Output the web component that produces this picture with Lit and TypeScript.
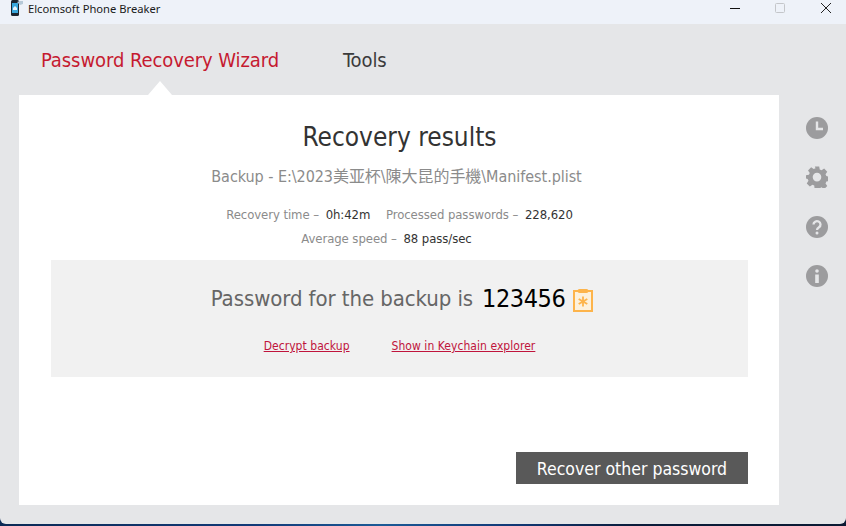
import { LitElement, html, css } from "lit";
import { customElement } from "lit/decorators.js";

@customElement("app-root")
export class AppRoot extends LitElement {
  static styles = css`
    :host { display: block; width: 846px; height: 526px; overflow: hidden; position: relative;
      font-family: "DejaVu Sans Condensed", "DejaVu Sans", "Noto Sans CJK TC", sans-serif; font-stretch: condensed; color: #333;
      background: linear-gradient(90deg,#0b2a55 0,#123a78 30%,#1b5a96 45%,#123a78 60%,#0a1c3a 75%,#0b1a33 100%); }
    .window { height: 524px; display: flex; flex-direction: column; background: #e5e6e8; border-radius: 0 0 6px 6px; overflow: hidden; }
    .titlebar { height: 24px; flex: none; background: #eef2f9; display: flex; align-items: center; }
    .appicon { margin-left: 10px; width: 14px; height: 16px; flex: none; margin-top: -8px; }
    .apptitle { margin-left: 4px; font-size: 11.2px; color: #1a1a1a; flex: 1; margin-top: -7px; font-family: "Noto Sans", sans-serif; font-stretch: normal; }
    .wc { display: flex; align-items: center; flex: none; padding-right: 15px; margin-top: -8px; }
    .wc svg { display: block; }
    .wc .min { margin-right: 35px; }
    .wc .max { margin-right: 36px; }
    .tabs { height: 71px; flex: none; display: flex; padding-left: 41px; gap: 64px; font-size: 20px; letter-spacing: -0.08px; }
    .tab { padding-top: 23px; line-height: 27px; color: #3b3b3b; }
    .tab.on { color: #c51a30; position: relative; }
    .tab.on::after { content: ""; position: absolute; left: 107px; bottom: 0; border-left: 12px solid transparent; border-right: 12px solid transparent; border-bottom: 14px solid #fff; }
    .main { display: flex; flex: none; }
    .card { width: 760px; height: 410px; margin-left: 19px; background: #fff; display: flex; flex-direction: column; align-items: center; padding: 25px 31px 21px 32px; box-sizing: border-box; flex: none; }
    h1 { margin: 0; font-weight: 400; font-size: 26px; line-height: 34px; color: #333; }
    .path { margin: 12px 6px 0 0; font-size: 16px; line-height: 22px; color: #8b8b8b; letter-spacing: -0.05px; }
    .stats { margin-top: 15px; font-size: 13px; line-height: 24px; color: #8b8b8b; text-align: center; width: 420px; letter-spacing: -0.07px; }
    .stats b { font-weight: 400; color: #333; margin-left: 3px; }
    .stats .gap { margin-left: 12px; }
    .stats .second { padding-right: 26px; }
    .panel { margin-top: 9px; width: 100%; height: 117px; background: #f1f1f1; display: flex; flex-direction: column; align-items: center; flex: none; }
    .pw { margin: 23px 0 0 5px; display: flex; align-items: center; font-size: 22px; line-height: 32px; color: #666; letter-spacing: -0.08px; }
    .pw .val { color: #000; font-size: 25px; margin-left: 9px; letter-spacing: -0.45px; }
    .pw svg { margin: 2px 0 0 8px; }
    .links { margin-top: 22px; display: flex; gap: 42px; font-size: 12px; line-height: 18px; }
    .links a { color: #c0143c; text-decoration: underline; letter-spacing: 0.05px; }
    .foot { margin-top: auto; align-self: flex-end; }
    .btn { width: 232px; height: 32px; background: #595959; color: #fff; border: 0; font: inherit; font-size: 17.5px; padding: 1px 0 0; display: block; }
    .side { width: 67px; display: flex; flex-direction: column; align-items: center; padding: 22px 0 0 8px; box-sizing: border-box; gap: 27px; flex: none; }
    .side svg { display: block; }
    .side svg:nth-child(3) { margin-top: 1px; }
  `;

  render() {
    return html`
      <div class="window">
        <div class="titlebar">
          <svg class="appicon" viewBox="0 0 14 16">
            <rect x="1" y="0" width="8" height="16" rx="1.5" fill="#1c2530"/>
            <rect x="2" y="3" width="6" height="10" fill="#39a7dc"/>
            <path d="M3 8l2-2 2 2v2H3z" fill="#e8f4fb"/>
            <path d="M7 2l3-1h3v3l-3 1z" fill="#b6c9d8"/>
          </svg>
          <span class="apptitle">Elcomsoft Phone Breaker</span>
          <div class="wc">
            <svg class="min" width="10" height="10" viewBox="0 0 10 10"><path d="M0 5.500h10" stroke="#111" stroke-width="1"/></svg>
            <svg class="max" width="10" height="10" viewBox="0 0 10 10"><rect x=".5" y=".5" width="9" height="9" rx="1" fill="none" stroke="#c4c6ca"/></svg>
            <svg width="10" height="10" viewBox="0 0 10 10"><path d="M0 0l10 10M10 0L0 10" stroke="#222" stroke-width="1"/></svg>
          </div>
        </div>
        <div class="tabs">
          <div class="tab on">Password Recovery Wizard</div>
          <div class="tab">Tools</div>
        </div>
        <div class="main">
          <div class="card">
            <h1>Recovery results</h1>
            <div class="path">Backup - E:\\2023美亚杯\\陳大昆的手機\\Manifest.plist</div>
            <div class="stats">
              <div>Recovery time – <b>0h:42m</b> <span class="gap">Processed passwords –</span> <b>228,620</b></div>
              <div class="second">Average speed – <b>88 pass/sec</b></div>
            </div>
            <div class="panel">
              <div class="pw">
                Password for the backup is
                <span class="val">123456</span>
                <svg width="20" height="24" viewBox="0 0 20 24">
                  <rect x="1" y="3" width="18" height="20" fill="#fdf1dc" stroke="#fdb44b" stroke-width="2"/>
                  <rect x="4.500" y="1" width="11" height="4" rx="2" fill="#fdb44b"/>
                  <path d="M10 8.500v10M5.700 11l8.600 5M14.300 11l-8.600 5" stroke="#fdb44b" stroke-width="1.800"/>
                </svg>
              </div>
              <div class="links"><a>Decrypt backup</a><a>Show in Keychain explorer</a></div>
            </div>
            <div class="foot"><button class="btn">Recover other password</button></div>
          </div>
          <div class="side">
            <svg width="22" height="22" viewBox="0 0 22 22"><circle cx="11" cy="11" r="11" fill="#9c9c9e"/><path d="M11 4.500V12h6" fill="none" stroke="#e5e6e8" stroke-width="2.4"/></svg>
            <svg width="22" height="22" viewBox="0 0 24 24"><path fill="#9c9c9e" fill-rule="evenodd" d="M9.6 0h4.8l.6 3.2 2 .9 2.8-1.9 3.4 3.4-1.9 2.8.9 2 3.2.6v4.800l-3.200.6-.9 2 1.900 2.800-3.400 3.400-2.800-1.900-2 .9-.6 3.200H9.600L9 20.800l-2-.9-2.800 1.900-3.400-3.400 1.900-2.800-.9-2L0 13.000V9.600l3.200-.6.9-2-1.900-2.800 3.400-3.400 2.800 1.900 2-.9zM12 6.800a4.700 4.700 0 1 0 0 9.400 4.700 4.700 0 0 0 0-9.400z" transform="translate(0 .6)"/></svg>
            <svg width="22" height="22" viewBox="0 0 22 22"><circle cx="11" cy="11" r="11" fill="#9c9c9e"/><path d="M7.500 8.500a3.500 3.300 0 1 1 5.500 2.700c-1.300.9-2 1.400-2 2.800" fill="none" stroke="#e5e6e8" stroke-width="2.300"/><circle cx="11" cy="17" r="1.500" fill="#e5e6e8"/></svg>
            <svg width="22" height="22" viewBox="0 0 22 22"><circle cx="11" cy="11" r="11" fill="#9c9c9e"/><circle cx="11" cy="6" r="1.800" fill="#e5e6e8"/><rect x="9.200" y="9.500" width="3.600" height="8.500" fill="#e5e6e8"/></svg>
          </div>
        </div>
      </div>
    `;
  }
}
